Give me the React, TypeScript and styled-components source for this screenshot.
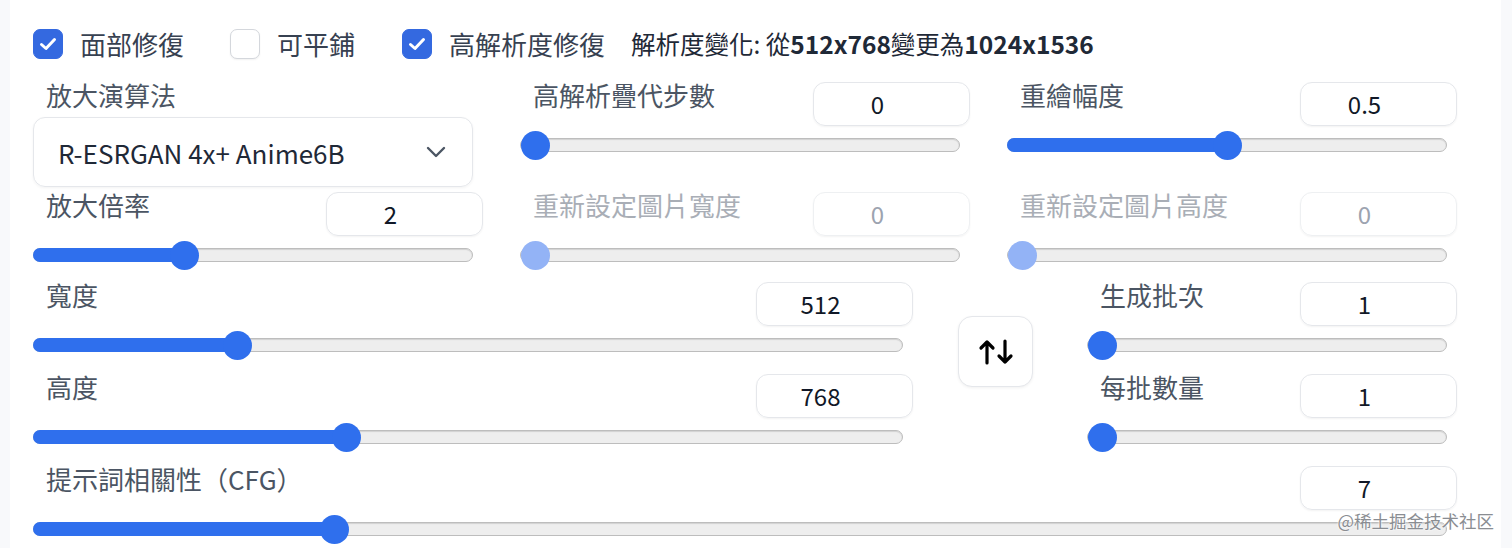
import styled, { createGlobalStyle } from 'styled-components';

const GlobalStyle = createGlobalStyle`
  body {
    margin: 0;
    background: #f8f9fb;
    font-family: "Noto Sans CJK TC", "Noto Sans", sans-serif;
  }
`;

const Page = styled.div`
  position: relative;
  margin: 0 11px 0 10px;
  min-height: 548px;
  box-sizing: border-box;
  background: #fff;
  padding: 29px 44px 0 23px;
  overflow: hidden;
`;

const CheckRow = styled.div`
  display: flex;
  align-items: center;
  height: 30px;
`;

const CheckItem = styled.label<{ $trail: number }>`
  display: flex;
  align-items: center;
  gap: 17px;
  margin-right: ${p => p.$trail}px;
  font-size: 26px;
  line-height: 30px;
  color: #374151;
`;

const Box = styled.span<{ $on: boolean }>`
  width: 30px;
  height: 30px;
  box-sizing: border-box;
  border-radius: 7px;
  display: flex;
  align-items: center;
  justify-content: center;
  background: ${p => (p.$on ? '#3469e0' : '#fff')};
  border: 1px solid ${p => (p.$on ? '#3469e0' : '#d4d7dc')};
  box-shadow: ${p => (p.$on ? 'none' : '0 1px 2px rgba(0,0,0,0.06)')};
`;

const Info = styled.p`
  margin: 0;
  font-size: 24.5px;
  line-height: 30px;
  color: #1f2937;

  strong {
    font-weight: 700;
  }
`;

const TopGrid = styled.div`
  display: grid;
  grid-template-columns: 450px 450px 450px;
  column-gap: 37px;
  row-gap: 5px;
  margin-top: 23px;
  align-items: start;
`;

const Label = styled.span<{ $off?: boolean }>`
  display: block;
  padding-left: 13px;
  font-size: 26px;
  line-height: 26px;
  color: ${p => (p.$off ? '#a9aeb6' : '#4b5563')};
`;

const Select = styled.div`
  margin-top: 9px;
  width: 440px;
  height: 70px;
  box-sizing: border-box;
  border: 1px solid #e5e7eb;
  border-radius: 12px;
  box-shadow: 0 1px 3px rgba(0, 0, 0, 0.05);
  display: flex;
  align-items: center;
  justify-content: space-between;
  padding: 0 26px 0 24px;
  font-size: 26px;
  color: #1f2937;
`;

const FieldWrap = styled.div<{ $w?: number }>`
  width: ${p => (p.$w ? `${p.$w}px` : 'auto')};
`;

const Head = styled.div`
  display: flex;
  justify-content: space-between;
  align-items: flex-start;
  height: 44px;
`;

const NumBox = styled.div<{ $off?: boolean }>`
  width: 157px;
  height: 44px;
  box-sizing: border-box;
  border: 1px solid ${p => (p.$off ? '#eef0f2' : '#e5e7eb')};
  border-radius: 12px;
  box-shadow: 0 1px 2px rgba(0, 0, 0, 0.05);
  display: flex;
  align-items: center;
  justify-content: center;
  padding: 0 38px 2px 10px;
  font-size: 24px;
  color: ${p => (p.$off ? '#9ca3af' : '#111827')};
`;

const SliderArea = styled.div`
  height: 38px;
  margin-right: 10px;
  display: flex;
  align-items: center;
`;

const Track = styled.div`
  position: relative;
  flex: 1;
  height: 14px;
  box-sizing: border-box;
  border-radius: 7px;
  background: #eeeeee;
  border: 1px solid #bdbdbd;
  box-shadow: inset 0 1px 1px rgba(0, 0, 0, 0.12);
`;

const Fill = styled.div`
  position: absolute;
  left: -1px;
  top: -1px;
  bottom: -1px;
  border-radius: 7px;
  background: #2f6fed;
`;

const Thumb = styled.div<{ $off?: boolean }>`
  position: absolute;
  top: 50%;
  width: 29px;
  height: 29px;
  margin: -14.5px 0 0 -14.5px;
  border-radius: 50%;
  background: ${p => (p.$off ? '#93b3f6' : '#2f6fed')};
`;

const Lower = styled.div`
  display: flex;
  align-items: flex-start;
  margin-top: 8px;
`;

const Stack = styled.div<{ $w: number }>`
  width: ${p => p.$w}px;
  display: flex;
  flex-direction: column;
  gap: 10px;
`;

const SwapButton = styled.button`
  margin: 34px 54px 0 45px;
  width: 75px;
  height: 71px;
  border: 1px solid #e5e7eb;
  border-radius: 14px;
  background: #fff;
  box-shadow: 0 1px 3px rgba(0, 0, 0, 0.06);
  display: flex;
  align-items: center;
  justify-content: center;
  padding: 0;
`;

const Bottom = styled.div`
  margin-top: 10px;
`;

const Watermark = styled.span`
  position: absolute;
  right: 7px;
  top: 507px;
  font-size: 17.5px;
  line-height: 28px;
  color: #8a8d92;
  text-shadow: 0 0 2px #fff, 0 0 2px #fff;
`;

function Check({ on, text, trail }: { on: boolean; text: string; trail: number }) {
  return (
    <CheckItem $trail={trail}>
      <Box $on={on}>
        {on && (
          <svg width="18" height="14" viewBox="0 0 18 14">
            <path d="M2.5 7.5 L7 11.5 L15.5 2.5" fill="none" stroke="#fff" strokeWidth="3" strokeLinecap="round" strokeLinejoin="round" />
          </svg>
        )}
      </Box>
      {text}
    </CheckItem>
  );
}

function Slider({ frac, off }: { frac: number; off?: boolean }) {
  const pos = `calc(14.5px + (100% - 29px) * ${frac})`;
  return (
    <SliderArea>
      <Track>
        {frac > 0 && <Fill style={{ width: pos }} />}
        <Thumb $off={off} style={{ left: pos }} />
      </Track>
    </SliderArea>
  );
}

type FieldProps = {
  label: string;
  value: string;
  frac: number;
  off?: boolean;
  width?: number;
};

function Field({ label, value, frac, off, width }: FieldProps) {
  return (
    <FieldWrap $w={width}>
      <Head>
        <Label $off={off}>{label}</Label>
        <NumBox $off={off}>{value}</NumBox>
      </Head>
      <Slider frac={frac} off={off} />
    </FieldWrap>
  );
}

export default function App() {
  return (
    <>
      <GlobalStyle />
      <Page>
        <CheckRow>
          <Check on text="面部修復" trail={46} />
          <Check on={false} text="可平鋪" trail={47} />
          <Check on text="高解析度修復" trail={26} />
          <Info>
            解析度變化: 從<strong>512x768</strong>變更為<strong>1024x1536</strong>
          </Info>
        </CheckRow>

        <TopGrid>
          <div>
            <Label>放大演算法</Label>
            <Select>
              R-ESRGAN 4x+ Anime6B
              <svg width="20" height="12" viewBox="0 0 20 12">
                <path d="M2 2 L10 10 L18 2" fill="none" stroke="#4b5563" strokeWidth="2.4" strokeLinecap="round" strokeLinejoin="round" />
              </svg>
            </Select>
          </div>
          <Field label="高解析疊代步數" value="0" frac={0} />
          <Field label="重繪幅度" value="0.5" frac={0.5} />
          <Field label="放大倍率" value="2" frac={1 / 3} />
          <Field label="重新設定圖片寬度" value="0" frac={0} off />
          <Field label="重新設定圖片高度" value="0" frac={0} off />
        </TopGrid>

        <Lower>
          <Stack $w={880}>
            <Field label="寬度" value="512" frac={(512 - 64) / 1984} />
            <Field label="高度" value="768" frac={(768 - 64) / 1984} />
          </Stack>
          <SwapButton aria-label="swap">
            <svg width="36" height="26" viewBox="0 0 36 26">
              <g fill="none" stroke="#000" strokeWidth="3.2" strokeLinecap="round" strokeLinejoin="round">
                <path d="M9 24 V3 M3 9 L9 3 L15 9" />
                <path d="M27 2 V23 M21 17 L27 23 L33 17" />
              </g>
            </svg>
          </SwapButton>
          <Stack $w={370}>
            <Field label="生成批次" value="1" frac={0} />
            <Field label="每批數量" value="1" frac={0} />
          </Stack>
        </Lower>

        <Bottom>
          <Field label="提示詞相關性（CFG）" value="7" frac={6 / 29} />
        </Bottom>

        <Watermark>@稀土掘金技术社区</Watermark>
      </Page>
    </>
  );
}
